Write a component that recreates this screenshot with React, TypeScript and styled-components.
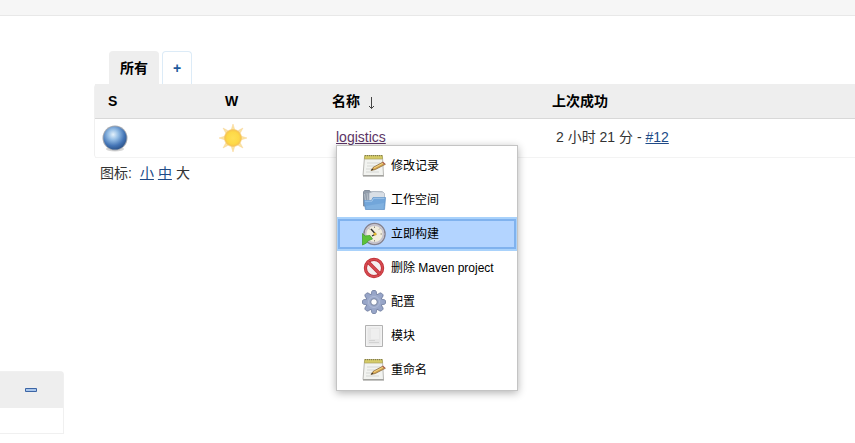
import React from "react";
import styled, { createGlobalStyle } from "styled-components";

const GlobalStyle = createGlobalStyle`
  * { box-sizing: border-box; }
  body {
    margin: 0;
    background: #fff;
    color: #333;
    font: 14px/18px "Liberation Sans", "Noto Sans CJK SC", sans-serif;
  }
`;

const TopBar = styled.header`
  height: 16px;
  background: #f6f6f6;
  border-bottom: 1px solid #e8e8e8;
`;

const Page = styled.div`
  display: grid;
  grid-template-columns: 64px minmax(0, 1fr);
  column-gap: 30px;
`;

const Side = styled.aside`
  padding-top: 355px;
`;

const Pane = styled.section`
  border: 1px solid #f0f0f0;
  border-left: 0;
  border-radius: 0 4px 0 0;
`;

const PaneHead = styled.div`
  display: flex;
  justify-content: flex-end;
  align-items: center;
  height: 36px;
  padding-right: 26px;
  background: #eee;
`;

const Collapse = styled.button`
  display: flex;
  padding: 0;
  border: 0;
  background: none;
`;

const PaneBody = styled.div`
  height: 25px;
`;

const Main = styled.main`
  padding-top: 35px;
`;

const Tabs = styled.nav`
  display: flex;
  gap: 3px;
  padding-left: 15px;
`;

const Tab = styled.a<{ $active?: boolean }>`
  height: 33px;
  padding: 0 10px;
  border: 1px solid ${(p) => (p.$active ? "#eee" : "#dcebf7")};
  border-bottom: 0;
  border-radius: 4px 4px 0 0;
  background: ${(p) => (p.$active ? "#eee" : "#fff")};
  color: ${(p) => (p.$active ? "#000" : "#1d5a9c")};
  font-weight: bold;
  line-height: 32px;
  text-decoration: none;
`;

const Jobs = styled.table`
  width: 100%;
  table-layout: fixed;
  border-spacing: 0;
  border-left: 1px solid #f0f0f0;
  border-radius: 4px 0 0 4px;
`;

const Col = styled.col<{ $width?: number }>`
  width: ${(p) => (p.$width ? p.$width + "px" : "auto")};
`;

const Head = styled.th`
  height: 35px;
  padding: 0 13px;
  background: #eee;
  border-bottom: 1px solid #d8d8d8;
  color: #000;
  text-align: left;
`;

const Arrow = styled.svg`
  margin-left: 7px;
  vertical-align: -4px;
`;

const Cell = styled.td<{ $icon?: boolean }>`
  height: 39px;
  padding: 0 ${(p) => (p.$icon ? 6 : 17)}px ${(p) => (p.$icon ? 0 : 2)}px;
  border-bottom: 1px solid #f3f3f3;
  svg { display: block; }
`;

const Link = styled.a<{ $visited?: boolean }>`
  color: ${(p) => (p.$visited ? "#5c3566" : "#204a87")};
  text-decoration: underline;
`;

const Anchor = styled.div`
  position: relative;
`;

const Menu = styled.ul`
  position: absolute;
  z-index: 1;
  top: 17px;
  left: 0;
  width: 182px;
  margin: 0;
  padding: 3px 0;
  list-style: none;
  background: #fff;
  border: 1px solid #c4c4c4;
  box-shadow: 0 2px 8px rgba(0, 0, 0, 0.3);
`;

const MenuLink = styled.a<{ $selected?: boolean }>`
  display: flex;
  align-items: center;
  gap: 5px;
  height: 34px;
  padding-left: 24px;
  border: 2px solid ${(p) => (p.$selected ? "#a9d2fb" : "transparent")};
  border-width: 2px 1px;
  background: ${(p) => (p.$selected ? "#b3d4ff" : "transparent")};
  box-shadow: ${(p) => (p.$selected ? "inset 0 0 0 2px #80b2ee" : "none")};
  color: #000;
  font-size: 12px;
  text-decoration: none;
`;

const Sizes = styled.p`
  display: flex;
  gap: 4px;
  margin: 6px 0 0;
  padding-left: 6px;
`;

const SizeLabel = styled.span`
  margin-right: 4px;
`;

function Ball() {
  return (
    <svg width="28" height="28" viewBox="0 0 28 28" aria-label="成功">
      <defs>
        <radialGradient id="ball" cx=".42" cy=".35" r=".65">
          <stop offset="0" stopColor="#e4f1fb" />
          <stop offset=".35" stopColor="#94bde5" />
          <stop offset=".75" stopColor="#4475b6" />
          <stop offset="1" stopColor="#2f5890" />
        </radialGradient>
      </defs>
      <ellipse cx="14" cy="25" rx="9" ry="2.5" fill="#bbb" opacity=".6" />
      <circle cx="14" cy="14" r="12.5" fill="#a5a9b0" />
      <circle cx="14" cy="14" r="11.5" fill="url(#ball)" />
    </svg>
  );
}

function Sun() {
  return (
    <svg width="30" height="30" viewBox="0 0 30 30" aria-label="晴">
      <defs>
        <radialGradient id="sun">
          <stop offset="0" stopColor="#ffe056" />
          <stop offset=".7" stopColor="#fdd947" />
          <stop offset="1" stopColor="#f6c24d" />
        </radialGradient>
      </defs>
      <g fill="#fae3a0" stroke="#f8d495" strokeWidth=".5">
        {[0, 45, 90, 135, 180, 225, 270, 315].map((angle) => (
          <path key={angle} d="M15 1l2.2 7h-4.4z" transform={`rotate(${angle} 15 15)`} />
        ))}
      </g>
      <circle cx="15" cy="15" r="8.5" fill="url(#sun)" stroke="#f5c76b" strokeWidth=".7" />
    </svg>
  );
}

function Notepad() {
  return (
    <svg width="24" height="24" viewBox="0 0 24 24">
      <path d="M2.5 3h18l1 18.5H1z" fill="#f2f3f0" stroke="#b9b9b5" />
      <path d="M1 22h21" stroke="#8c8c88" />
      <path d="M2.5 1.5h18v3.5h-18z" fill="#d5cb67" stroke="#a9a25c" strokeWidth=".7" />
      <path d="M3 1.7h17" stroke="#777344" strokeDasharray="1 1" />
      <path d="M5 9h13M5 12h10M4 15h6M4 18h13" stroke="#d5d7d4" />
      <path d="M9 16.5l2-3L21 8l2.3 2.3-10 5.2z" fill="#d7a54b" stroke="#8c6d43" strokeWidth=".8" />
      <path d="M12 14l9.5-5" stroke="#f3d68a" />
      <path d="M20 8.5l1.3-.8 2.2 2.2-1.2.8z" fill="#b46c58" />
      <path d="M9 16.5l1.2-1.7 1.2 1z" fill="#333" />
    </svg>
  );
}

function Folder() {
  return (
    <svg width="24" height="24" viewBox="0 0 24 24">
      <path d="M1.5 18V4l1-1.5h5l1 1.5h12V18z" fill="#929dab" stroke="#858f9c" />
      <path d="M7 5l4-1.5 10 .5 1.5 1.5V18H7z" fill="#d9dfe6" stroke="#a3adb9" strokeWidth=".7" />
      <path d="M2.5 6l1.5 9M5 5l1 9" stroke="#b5bfc9" />
      <path d="M2 12.5h7.5L11 9.5h12.5L22.5 21.5h-19z" fill="#72a6da" stroke="#6496c9" strokeWidth=".8" />
      <path d="M3 13.2h7L11.5 10.3H22.5" stroke="#a0c6ea" fill="none" />
      <path d="M4 18l18-3-.5 6H4.5z" fill="#80b1e0" />
    </svg>
  );
}

function ClockRun() {
  return (
    <svg width="24" height="24" viewBox="0 0 24 24">
      <circle cx="12.5" cy="12" r="10.5" fill="#f1eddd" stroke="#85828f" strokeWidth="1.5" />
      <circle cx="12.5" cy="12" r="9" fill="none" stroke="#c5c2cc" strokeWidth="1.8" />
      <path d="M12.5 4.5v1.5M20 12h-1.5M12.5 18v1.5M7 6.5l1 1M18 6.5l-1 1" stroke="#918c80" />
      <path d="M9 7l4.5 5-3.5 2" fill="none" stroke="#333" strokeWidth="1.4" />
      <circle cx="13" cy="12" r="1.5" fill="#dfb62f" />
      <path d="M.5 11.5l2.5 2.5 5-.5 2.5 3.5-4 1.5-2 2.5L.5 23z" fill="#5cc238" stroke="#46a22e" strokeWidth=".8" />
    </svg>
  );
}

function Forbidden() {
  return (
    <svg width="24" height="24" viewBox="0 0 24 24">
      <circle cx="12" cy="12" r="8.6" fill="#f5efef" stroke="#bd2c34" strokeWidth="3.2" />
      <circle cx="12" cy="12" r="8.6" fill="none" stroke="#d54a4f" strokeWidth="1.8" />
      <path d="M6.3 6.3l11.4 11.4" stroke="#bd2c34" strokeWidth="3.4" />
      <path d="M6 6l12 12" stroke="#d54a4f" strokeWidth="2" />
    </svg>
  );
}

function Gear() {
  return (
    <svg width="24" height="24" viewBox="0 0 24 24">
      <g fill="#97a5c8" stroke="#6f7c9d" strokeWidth=".8">
        {[0, 45, 90, 135, 180, 225, 270, 315].map((angle) => (
          <path key={angle} d="M8.8 6l1-4.5.8-1h2.8l.8 1 1 4.5z" transform={`rotate(${angle} 12 12)`} />
        ))}
      </g>
      <circle cx="12" cy="12" r="7.8" fill="#9ba9ca" />
      <circle cx="12" cy="12" r="5.5" fill="none" stroke="#b0bbd7" />
      <circle cx="12" cy="12" r="3.3" fill="#fff" stroke="#75829f" />
    </svg>
  );
}

function Module() {
  return (
    <svg width="24" height="24" viewBox="0 0 24 24">
      <path d="M3.5 1.5h17v21h-17z" fill="#f2f2f2" stroke="#b2b2b2" />
      <path d="M5.5 3.5h13v17h-13z" fill="#e7e7e7" />
      <path d="M9 5h8v10H9z" fill="#efefef" />
      <path d="M7 16.5h6M7 18.5h10" stroke="#d2d2d2" />
    </svg>
  );
}

const actions = [
  { label: "修改记录", Icon: Notepad },
  { label: "工作空间", Icon: Folder },
  { label: "立即构建", Icon: ClockRun, selected: true },
  { label: "删除 Maven project", Icon: Forbidden },
  { label: "配置", Icon: Gear },
  { label: "模块", Icon: Module },
  { label: "重命名", Icon: Notepad },
];

export default function App() {
  return (
    <>
      <GlobalStyle />
      <TopBar />
      <Page>
        <Side>
          <Pane>
            <PaneHead>
              <Collapse aria-label="折叠">
                <svg width="12" height="5" viewBox="0 0 12 5">
                  <path d="M.5.5h11v3H.5z" fill="#a9c6eb" stroke="#3c65a5" />
                </svg>
              </Collapse>
            </PaneHead>
            <PaneBody />
          </Pane>
        </Side>
        <Main>
          <Tabs>
            <Tab href="#all" $active>所有</Tab>
            <Tab href="#new">+</Tab>
          </Tabs>
          <Jobs>
            <colgroup>
              <Col $width={117} />
              <Col $width={107} />
              <Col $width={220} />
              <Col />
            </colgroup>
            <thead>
              <tr>
                <Head>S</Head>
                <Head>W</Head>
                <Head>
                  名称
                  <Arrow width="10" height="14" viewBox="0 0 10 14" fill="none" stroke="#444">
                    <path d="M4.5 1v11.5M2 10l2.5 2.5L7 10" />
                  </Arrow>
                </Head>
                <Head>上次成功</Head>
              </tr>
            </thead>
            <tbody>
              <tr>
                <Cell $icon><Ball /></Cell>
                <Cell $icon><Sun /></Cell>
                <Cell>
                  <Anchor>
                    <Link href="#logistics" $visited>logistics</Link>
                    <Menu>
                      {actions.map(({ label, Icon, selected }) => (
                        <li key={label}>
                          <MenuLink href="#action" $selected={selected}>
                            <Icon />
                            {label}
                          </MenuLink>
                        </li>
                      ))}
                    </Menu>
                  </Anchor>
                </Cell>
                <Cell>
                  2 小时 21 分 - <Link href="#12">#12</Link>
                </Cell>
              </tr>
            </tbody>
          </Jobs>
          <Sizes>
            <SizeLabel>图标:</SizeLabel>
            <Link href="#small">小</Link>
            <Link href="#medium">中</Link>
            <span>大</span>
          </Sizes>
        </Main>
      </Page>
    </>
  );
}
